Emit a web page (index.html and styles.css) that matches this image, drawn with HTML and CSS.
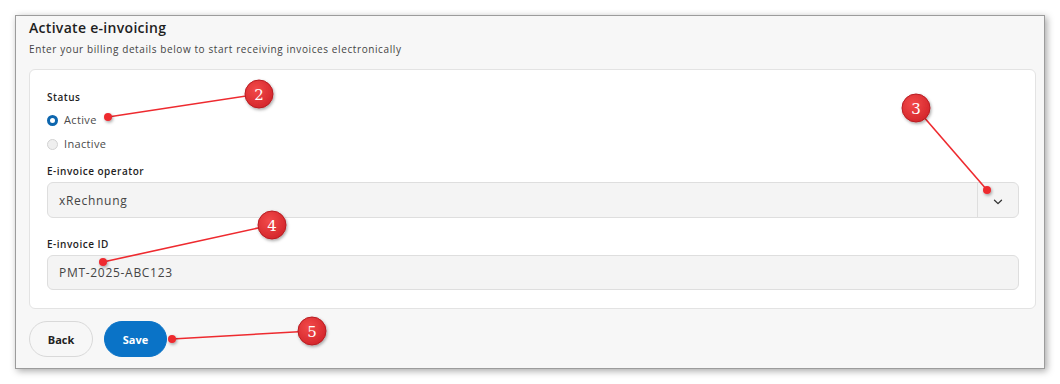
FILE: index.html
```html
<!DOCTYPE html>
<html lang="en">
<head>
<meta charset="utf-8">
<title>Activate e-invoicing</title>
<link rel="stylesheet" href="styles.css">
</head>
<body>
<div class="page">
  <div class="window">
    <h1 class="title">Activate e-invoicing</h1>
    <p class="subtitle">Enter your billing details below to start receiving invoices electronically</p>
    <div class="card">
      <div class="label status-label">Status</div>
      <label class="radio-row first">
        <span class="radio checked"></span>
        <span class="radio-text">Active</span>
      </label>
      <label class="radio-row">
        <span class="radio"></span>
        <span class="radio-text">Inactive</span>
      </label>
      <div class="label field-label">E-invoice operator</div>
      <div class="select">
        <span class="select-value">xRechnung</span>
        <span class="select-toggle">
          <svg width="10" height="6" viewBox="0 0 10 6"><path d="M1.5 1.2 L5 4.6 L8.5 1.2" fill="none" stroke="#333" stroke-width="1.3" stroke-linecap="round" stroke-linejoin="round"/></svg>
        </span>
      </div>
      <div class="label field-label id-label">E-invoice ID</div>
      <div class="input">PMT-2025-ABC123</div>
    </div>
    <div class="actions">
      <button class="btn btn-back">Back</button>
      <button class="btn btn-save">Save</button>
    </div>
  </div>
</div>
<svg class="callouts" width="1060" height="384" viewBox="0 0 1060 384">
  <defs>
    <radialGradient id="cg" cx="40%" cy="35%" r="70%">
      <stop offset="0%" stop-color="#f24a4a"/>
      <stop offset="100%" stop-color="#d3252a"/>
    </radialGradient>
    <filter id="sh" x="-50%" y="-50%" width="200%" height="200%">
      <feDropShadow dx="1" dy="1.5" stdDeviation="1.5" flood-color="#000" flood-opacity="0.35"/>
    </filter>
  </defs>
  <g stroke="#ee2a2f" stroke-width="1.6">
    <line x1="108" y1="117" x2="259" y2="94"/>
    <line x1="987" y1="190" x2="916" y2="108"/>
    <line x1="103" y1="262" x2="272" y2="225"/>
    <line x1="172" y1="339" x2="312" y2="331"/>
  </g>
  <g fill="#ee2a2f" filter="url(#sh)">
    <circle cx="108" cy="117" r="4"/>
    <circle cx="987" cy="190" r="4"/>
    <circle cx="103" cy="262" r="4"/>
    <circle cx="172" cy="339" r="4"/>
  </g>
  <g fill="url(#cg)" stroke="#b81d22" stroke-width="1" filter="url(#sh)">
    <circle cx="259" cy="94" r="14"/>
    <circle cx="916" cy="108" r="14"/>
    <circle cx="272" cy="225" r="14"/>
    <circle cx="312" cy="331" r="14"/>
  </g>
  <g class="callout-num" fill="#fff" text-anchor="middle">
    <text x="259" y="99.5">2</text>
    <text x="916" y="113.5">3</text>
    <text x="272" y="230.5">4</text>
    <text x="312" y="336.5">5</text>
  </g>
</svg>
</body>
</html>
```
FILE: styles.css
```css
* { box-sizing: border-box; }
html, body { margin: 0; padding: 0; background: #ffffff; }
body {
  width: 1060px;
  height: 384px;
  overflow: hidden;
  position: relative;
  font-family: "Open Sans", "DejaVu Sans", sans-serif;
  color: #222;
}
.page { padding: 15px 0 0 15px; }
.window {
  width: 1030px;
  height: 354px;
  background: #f7f7f7;
  border: 1px solid #9c9c9c;
  box-shadow: 2px 2px 7px rgba(0,0,0,0.35);
  padding: 2px 8px 0 13px;
  display: flex;
  flex-direction: column;
}
.title {
  margin: 0;
  font-size: 14px;
  line-height: 20px;
  font-weight: 600;
  letter-spacing: 0.3px;
  color: #1e1e1e;
}
.subtitle {
  margin: 4px 0 0 0;
  font-size: 10px;
  line-height: 14px;
  letter-spacing: 0.6px;
  color: #444;
}
.card {
  margin-top: 13px;
  width: 1007px;
  height: 240px;
  background: #ffffff;
  border: 1px solid #e3e3e3;
  border-radius: 6px;
  padding: 20px 16px 0 17px;
  display: flex;
  flex-direction: column;
}
.label {
  font-size: 10px;
  line-height: 14px;
  font-weight: 600;
  letter-spacing: 0.5px;
  color: #1f1f1f;
}
.radio-row {
  display: flex;
  align-items: center;
  height: 18px;
  margin-top: 6px;
}
.radio-row.first { margin-top: 7px; }
.radio {
  width: 11px;
  height: 11px;
  border-radius: 50%;
  border: 1px solid #d2d2d2;
  background: #efefef;
  margin-right: 6px;
  flex: none;
}
.radio.checked {
  border: 3px solid #0d66ae;
  background: #fff;
}
.radio-text {
  font-size: 11px;
  line-height: 18px;
  letter-spacing: 0.35px;
  color: #4a4a4a;
}
.field-label { margin-top: 11px; }
.id-label { margin-top: 19px; }
.select, .input {
  margin-top: 4px;
  height: 36px;
  background: #f4f4f4;
  border: 1px solid #dedede;
  border-radius: 6px;
  font-size: 12px;
  letter-spacing: 0.7px;
  color: #444;
  display: flex;
  align-items: center;
}
.input { height: 35px; padding-left: 11px; }
.select-value { flex: 1; padding-left: 11px; }
.select-toggle {
  width: 41px;
  height: 100%;
  border-left: 1px solid #dedede;
  display: flex;
  align-items: center;
  justify-content: center;
  padding-top: 3px;
}
.actions {
  display: flex;
  gap: 11px;
  margin-top: 12px;
  padding-left: 0;
}
.btn {
  height: 36px;
  border-radius: 18px;
  font-family: "Open Sans", "DejaVu Sans", sans-serif;
  font-size: 11px;
  font-weight: 700;
  padding: 0;
  cursor: pointer;
}
.btn-back {
  width: 64px;
  background: #f7f7f7;
  border: 1px solid #d9d9d9;
  color: #222;
}
.btn-save {
  width: 63px;
  background: #0a73c7;
  border: 1px solid #0a73c7;
  color: #fff;
}
.callouts {
  position: absolute;
  left: 0;
  top: 0;
  pointer-events: none;
}
.callout-num {
  font-family: "DejaVu Serif", "Liberation Serif", serif;
  font-size: 15px;
}
```
